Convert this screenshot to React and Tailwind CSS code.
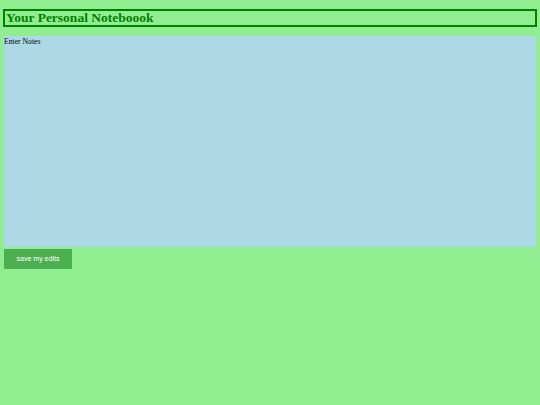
import React, { useState } from "react";

const App = () => {
  const [notes, setNotes] = useState("");

  return (
    <div className="min-h-[405px] w-[540px] bg-[#90ee90] px-[3px] pt-[9px]">
      {/* Title */}
      <h1 className="flex h-[18px] items-center border-2 border-[#008000] px-[1px] text-[13.5px] font-bold text-[#008000] font-['Liberation_Serif',serif]">
        Your Personal Noteboook
      </h1>

      {/* Notes area */}
      <div className="mt-[9px] mx-[1px] flex h-[211px] flex-col overflow-hidden bg-[#add8e6]">
        <label className="text-[7.7px] leading-[9px] pt-[1px] text-black font-['Liberation_Serif',serif]">
          Enter Notes
        </label>
        <textarea
          value={notes}
          onChange={(e) => setNotes(e.target.value)}
          className="min-h-0 flex-1 resize-none bg-transparent outline-none text-[8px]"
        />
      </div>

      <button className="mt-[2px] ml-[1px] block h-[20px] w-[68px] bg-[#4caf50] text-[7px] text-white font-['Liberation_Sans',sans-serif]">
        save my edits
      </button>
    </div>
  );
};

export default App;
